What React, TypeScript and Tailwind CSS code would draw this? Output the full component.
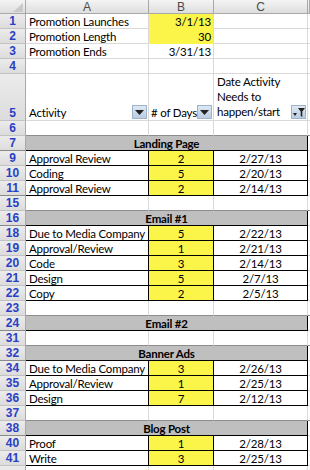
import React from "react";

type Row =
  | { n: string; kind: "blank" }
  | { n: string; kind: "top"; label: string; value: string; yellow: boolean }
  | { n: string; kind: "head" }
  | { n: string; kind: "section"; title: string }
  | { n: string; kind: "data"; activity: string; days: string; date: string };

const rows: Row[] = [
  { n: "1", kind: "top", label: "Promotion Launches", value: "3/1/13", yellow: true },
  { n: "2", kind: "top", label: "Promotion Length", value: "30", yellow: true },
  { n: "3", kind: "top", label: "Promotion Ends", value: "3/31/13", yellow: false },
  { n: "4", kind: "blank" },
  { n: "5", kind: "head" },
  { n: "6", kind: "blank" },
  { n: "7", kind: "section", title: "Landing Page" },
  { n: "9", kind: "data", activity: "Approval Review", days: "2", date: "2/27/13" },
  { n: "10", kind: "data", activity: "Coding", days: "5", date: "2/20/13" },
  { n: "11", kind: "data", activity: "Approval Review", days: "2", date: "2/14/13" },
  { n: "15", kind: "blank" },
  { n: "16", kind: "section", title: "Email #1" },
  { n: "18", kind: "data", activity: "Due to Media Company", days: "5", date: "2/22/13" },
  { n: "19", kind: "data", activity: "Approval/Review", days: "1", date: "2/21/13" },
  { n: "20", kind: "data", activity: "Code", days: "3", date: "2/14/13" },
  { n: "21", kind: "data", activity: "Design", days: "5", date: "2/7/13" },
  { n: "22", kind: "data", activity: "Copy", days: "2", date: "2/5/13" },
  { n: "23", kind: "blank" },
  { n: "24", kind: "section", title: "Email #2" },
  { n: "31", kind: "blank" },
  { n: "32", kind: "section", title: "Banner Ads" },
  { n: "34", kind: "data", activity: "Due to Media Company", days: "3", date: "2/26/13" },
  { n: "35", kind: "data", activity: "Approval/Review", days: "1", date: "2/25/13" },
  { n: "36", kind: "data", activity: "Design", days: "7", date: "2/12/13" },
  { n: "37", kind: "blank" },
  { n: "38", kind: "section", title: "Blog Post" },
  { n: "40", kind: "data", activity: "Proof", days: "1", date: "2/28/13" },
  { n: "41", kind: "data", activity: "Write", days: "3", date: "2/25/13" },
  { n: "", kind: "blank" },
];

// rows hidden right after these ones -> darker line in the row header
const hiddenAfter = ["7", "11", "16", "24", "32", "38"];

function DropButton() {
  return (
    <div className="w-[15px] h-[14px] mb-[1px] shrink-0 flex items-center justify-center bg-gradient-to-b from-[#dde8f3] to-[#b9cde1] border border-[#9fb2c6]">
      <svg width="9" height="5" viewBox="0 0 9 5">
        <path d="M0 0 L9 0 L4.5 5 Z" fill="#222" />
      </svg>
    </div>
  );
}

function FilterButton() {
  return (
    <div className="w-[15px] h-[14px] mb-[1px] shrink-0 flex items-center justify-center gap-[1px] bg-gradient-to-b from-[#dde8f3] to-[#b9cde1] border border-[#9fb2c6]">
      <svg width="4" height="3" viewBox="0 0 4 3" className="mt-[4px]">
        <path d="M0 0 L4 0 L2 3 Z" fill="#222" />
      </svg>
      <svg width="7" height="9" viewBox="0 0 7 9">
        <path d="M0 0 L7 0 L4.3 3.5 L4.3 9 L2.7 8 L2.7 3.5 Z" fill="#222" />
      </svg>
    </div>
  );
}

function RowHeader({ n, tall, hidden }: { n: string; tall?: boolean; hidden?: boolean }) {
  return (
    <div
      className={`flex justify-center ${tall ? "items-end pb-[1px]" : "items-center"} bg-gradient-to-b from-[#ececec] to-[#dcdcdc] border-r border-r-[#a9a9a9] border-b ${
        hidden ? "border-b-[#8a8a8a]" : "border-b-[#c2c2c2]"
      } text-[12px] font-bold text-[#2a3fc4] leading-[12px] tracking-normal font-['Liberation_Sans',sans-serif]`}
    >
      {n}
    </div>
  );
}

const cols = "grid grid-cols-[26px_123px_65px_94px_1fr]";

export default function App() {
  return (
    <div className="w-[310px] h-[470px] overflow-hidden bg-white font-['Lato',sans-serif] text-[11.5px] tracking-[-0.2px] text-black leading-[13px]">
      {/* column header */}
      <div className={`${cols} h-[14px]`}>
        <div className="relative bg-gradient-to-b from-[#f4f4f4] to-[#dedede] border-r border-b border-[#a9a9a9]">
          <svg width="10" height="9" viewBox="0 0 10 9" className="absolute right-[2px] bottom-[1px]">
            <path d="M10 0 L10 9 L0 9 Z" fill="#c9c9c9" />
          </svg>
        </div>
        {["A", "B", "C", ""].map((c, i) => (
          <div
            key={i}
            className="flex items-center justify-center bg-gradient-to-b from-[#f4f4f4] to-[#dedede] border-r border-b border-[#a9a9a9] text-[12px] leading-[12px] tracking-normal text-[#4a4a4a] font-['Liberation_Sans',sans-serif]"
          >
            {c}
          </div>
        ))}
      </div>

      {rows.map((r, idx) => {
        const next = rows[idx + 1];
        const boxed = r.kind === "data" || r.kind === "section";
        const nextBoxed = next && (next.kind === "data" || next.kind === "section");
        const bottom = boxed ? "border-b-black" : nextBoxed ? "border-b-[#8c8c8c]" : "border-b-[#d9d9d9]";
        const hidden = hiddenAfter.includes(r.n);

        if (r.kind === "head") {
          return (
            <div key={r.n} className={`${cols} h-[47px]`}>
              <RowHeader n={r.n} tall />
              <div className={`flex items-end justify-between pl-[3px] pr-[1px] border-r border-r-[#d9d9d9] border-b ${bottom}`}>
                <span className="pb-[1px]">Activity</span>
                <DropButton />
              </div>
              <div className={`flex items-end justify-between pl-[2px] pr-[1px] border-r border-r-[#d9d9d9] border-b ${bottom}`}>
                <span className="pb-[1px] whitespace-nowrap">{"# of Days"}</span>
                <DropButton />
              </div>
              <div className={`flex items-end justify-between pl-[3px] pr-[1px] border-r border-r-[#d9d9d9] border-b ${bottom}`}>
                <span className="pb-[1px] leading-[15px] whitespace-nowrap">
                  Date Activity
                  <br />
                  Needs to
                  <br />
                  happen/start
                </span>
                <FilterButton />
              </div>
              <div className={`border-b ${bottom}`} />
            </div>
          );
        }

        if (r.kind === "section") {
          return (
            <div key={r.n} className={`${cols} h-[15px]`}>
              <RowHeader n={r.n} hidden={hidden} />
              <div className={`col-span-3 flex items-center justify-center bg-[#bfbfbf] border-r border-r-black border-b ${bottom} font-bold`}>
                {r.title}
              </div>
              <div className="border-b border-b-[#d9d9d9]" />
            </div>
          );
        }

        if (r.kind === "data") {
          return (
            <div key={r.n} className={`${cols} h-[15px]`}>
              <RowHeader n={r.n} hidden={hidden} />
              <div className={`flex items-center pl-[3px] whitespace-nowrap border-r border-r-black border-b ${bottom}`}>{r.activity}</div>
              <div className={`flex items-center justify-center bg-[#fbf54a] border-r border-r-black border-b ${bottom}`}>{r.days}</div>
              <div className={`flex items-center justify-center border-r border-r-black border-b ${bottom}`}>{r.date}</div>
              <div className="border-b border-b-[#d9d9d9]" />
            </div>
          );
        }

        if (r.kind === "top") {
          return (
            <div key={r.n} className={`${cols} h-[15px]`}>
              <RowHeader n={r.n} />
              <div className={`flex items-center pl-[3px] whitespace-nowrap border-r border-r-[#d9d9d9] border-b ${bottom}`}>{r.label}</div>
              <div
                className={`flex items-center justify-end pr-[2px] border-r border-r-[#d9d9d9] border-b ${
                  r.yellow ? "bg-[#fbf54a] border-b-[#fbf54a]" : bottom
                }`}
              >
                {r.value}
              </div>
              <div className={`border-r border-r-[#d9d9d9] border-b ${bottom}`} />
              <div className={`border-b ${bottom}`} />
            </div>
          );
        }

        return (
          <div key={r.n || "last"} className={`${cols} h-[15px]`}>
            <RowHeader n={r.n} hidden={hidden} />
            <div className={`border-r border-r-[#d9d9d9] border-b ${bottom}`} />
            <div className={`border-r border-r-[#d9d9d9] border-b ${bottom}`} />
            <div className={`border-r border-r-[#d9d9d9] border-b ${bottom}`} />
            <div className={`border-b ${bottom}`} />
          </div>
        );
      })}
    </div>
  );
}
